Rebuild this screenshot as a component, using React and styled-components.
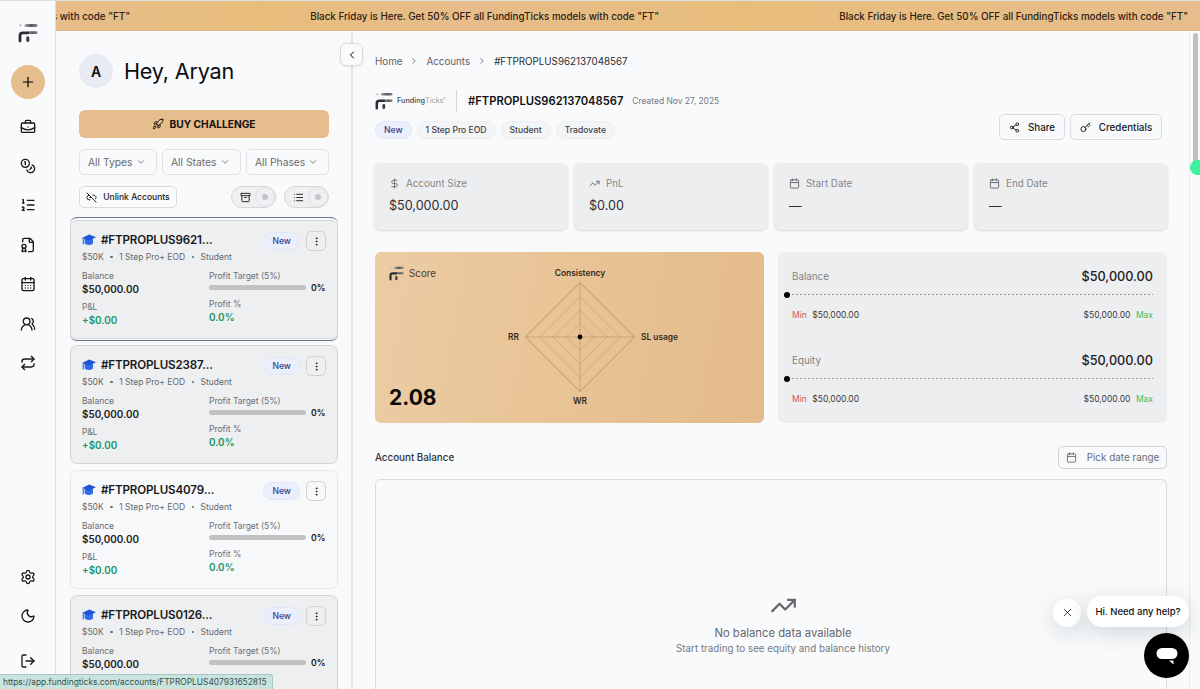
import styled, { createGlobalStyle } from "styled-components";
import {
    Archive,
    Calendar,
    CalendarDays,
    BriefcaseBusiness,
    ChevronDown,
    ChevronLeft,
    ChevronRight,
    Coins,
    DollarSign,
    EllipsisVertical,
    FileBadge,
    Key,
    Link2Off,
    List,
    ListOrdered,
    LogOut,
    Moon,
    Plus,
    Repeat,
    Rocket,
    Settings,
    Share2,
    TrendingUp,
    UsersRound,
    X,
} from "lucide-react";

const GlobalStyle = createGlobalStyle`
    * {
        box-sizing: border-box;
    }

    body {
        margin: 0;
        overflow: hidden;
        background-color: #f9fafc;
        color: #18181b;
        font-family: Inter, sans-serif;
        font-size: 10px;
    }
`;

const Page = styled.div`
    position: relative;
    display: flex;
    width: 1200px;
    height: 689px;
    overflow: hidden;
    border-top: 1px solid #dfdfdf;
`;

const SideBar = styled.nav`
    width: 56px;
    flex-shrink: 0;
    display: flex;
    flex-direction: column;
    align-items: center;
    padding-top: 22px;
    border-right: 1px solid #dcdde0;
`;

const AddBtn = styled.button`
    width: 34px;
    height: 34px;
    margin: 22px 0 8px;
    padding: 0;
    display: flex;
    align-items: center;
    justify-content: center;
    border: none;
    border-radius: 50%;
    background-color: #e6be8d;
`;

const NavItem = styled.div`
    height: ${(props) => props.$height || 39.4}px;
    display: flex;
    align-items: center;
`;

const NavBottom = styled.div`
    margin-top: auto;
    padding-bottom: 4px;
`;

const Right = styled.div`
    flex: 1;
    min-width: 0;
    display: flex;
    flex-direction: column;
`;

const Banner = styled.div`
    position: relative;
    z-index: 2;
    height: 30px;
    flex-shrink: 0;
    display: flex;
    align-items: center;
    justify-content: flex-end;
    gap: 179px;
    padding: 2px 12px 0 0;
    overflow: hidden;
    background: linear-gradient(90deg, #e6bd8a, #e8bd7c 18%, #e6bd8b 36%, #e8bd7c 60%, #e6bd8b);
    border-bottom: 1px solid #dfb682;
    color: #2d2114;
    font-size: 9.8px;
    font-weight: 500;
    white-space: nowrap;
`;

const BannerText = styled.span`
    width: 350px;
    flex-shrink: 0;
    text-align: right;
`;

const Columns = styled.div`
    flex: 1;
    min-height: 0;
    display: flex;
`;

const Accounts = styled.aside`
    position: relative;
    width: 297px;
    flex-shrink: 0;
    padding: 23px 13px 0 14px;
    border-right: 2px solid #e3e4e8;
`;

const CollapseBtn = styled.button`
    position: absolute;
    top: 12px;
    right: -12px;
    z-index: 3;
    width: 23px;
    height: 23px;
    padding: 0;
    display: flex;
    align-items: center;
    justify-content: center;
    border: 1px solid #d9dade;
    border-radius: 6px;
    background-color: #fbfbfd;
    box-shadow: 0 1px 3px rgba(0, 0, 0, 0.08);
`;

const Controls = styled.div`
    padding: 0 9px;
`;

const Greeting = styled.div`
    height: 34px;
    display: flex;
    align-items: center;
    gap: 11px;
    font-size: 21.6px;
    letter-spacing: -0.2px;
    color: #0c0c0e;
`;

const Avatar = styled.div`
    width: 34px;
    height: 34px;
    display: flex;
    align-items: center;
    justify-content: center;
    border-radius: 50%;
    background-color: #e9ebf4;
    font-size: 14px;
    font-weight: 600;
`;

const BuyBtn = styled.button`
    width: 250px;
    height: 28px;
    margin-top: 22px;
    display: flex;
    align-items: center;
    justify-content: center;
    gap: 5px;
    border: none;
    border-radius: 6px;
    background-color: #e6be8d;
    color: #16120d;
    font: 700 10.2px Inter, sans-serif;
`;

const Filters = styled.div`
    width: 250px;
    margin-top: 11px;
    display: flex;
    justify-content: space-between;
`;

const Select = styled.div`
    width: ${(props) => props.$width}px;
    height: 26px;
    padding: 0 10px 0 8px;
    display: flex;
    align-items: center;
    justify-content: space-between;
    border: 1px solid #e1e2e6;
    border-radius: 5px;
    color: #696b70;
    font-size: 10.3px;
    white-space: nowrap;
`;

const Tools = styled.div`
    width: 250px;
    height: 22px;
    margin-top: 11px;
    display: flex;
    gap: 8px;
`;

const UnlinkBtn = styled.div`
    width: 98px;
    margin-right: auto;
    display: flex;
    align-items: center;
    justify-content: center;
    gap: 6px;
    border: 1px solid #d9dade;
    border-radius: 5px;
    font-size: 8.5px;
    font-weight: 500;
    white-space: nowrap;
`;

const Toggle = styled.div`
    width: 45px;
    display: flex;
    align-items: center;
    justify-content: space-between;
    padding-left: 8px;
    border: 1px solid #d6d7da;
    border-radius: 11px;
    background-color: #eff0f2;
`;

const Knob = styled.div`
    width: 20px;
    height: 20px;
    display: flex;
    align-items: center;
    justify-content: center;
    border: 1px solid #dedfe2;
    border-radius: 50%;

    &::after {
        content: "";
        width: 6px;
        height: 6px;
        border-radius: 50%;
        background-color: #c3c4c7;
    }
`;

const CardList = styled.div`
    margin-top: 9px;
    display: flex;
    flex-direction: column;
    gap: 6px;
`;

const Selected = styled.div`
    margin-bottom: -2px;
    padding: 2px 0 1px;
    border: solid #6f7387;
    border-width: 1px 0;
    border-radius: 7px;
`;

const Card = styled.div`
    height: 119px;
    padding: 10px 11px 0 11px;
    border: 1px solid ${(props) => (props.$hover ? "#e6e7ea" : "#d3d5d8")};
    border-radius: 7px;
    background-color: ${(props) => (props.$hover ? "#f7f8fa" : "#edeff0")};
`;

const CardHead = styled.div`
    height: 20px;
    display: flex;
    align-items: center;
`;

const CardTitle = styled.div`
    flex: 1;
    display: flex;
    align-items: center;
    gap: 5px;
    padding-bottom: 3px;
    font-size: 11.6px;
    font-weight: 600;
    letter-spacing: -0.15px;
`;

const Tag = styled.span`
    height: 18px;
    padding: 0 8px;
    display: inline-flex;
    align-items: center;
    border: 1px solid ${(props) => (props.$blue ? "#e1e6f9" : "#edeef1")};
    border-radius: 9px;
    background-color: ${(props) => (props.$blue ? "#ebeffc" : "#f4f5f7")};
    color: ${(props) => (props.$blue ? "#37418c" : "#3f4044")};
    font-size: 8.6px;
    font-weight: 500;
`;

const MenuBtn = styled.div`
    width: 20px;
    height: 20px;
    margin-left: 6px;
    display: flex;
    align-items: center;
    justify-content: center;
    border: 1px solid #d0d2d5;
    border-radius: 5px;
`;

const Meta = styled.div`
    height: 12px;
    display: flex;
    align-items: center;
    gap: 6.5px;
    color: #66686d;
    font-size: 8.5px;
    white-space: nowrap;
`;

const Dot = styled.span`
    width: 2.5px;
    height: 2.5px;
    border-radius: 50%;
    background-color: #66686d;
`;

const Figures = styled.div`
    margin-top: 7px;
    display: grid;
    grid-template-columns: 127px 1fr;
`;

const Label = styled.div`
    height: 13px;
    line-height: 12px;
    color: #6c6e73;
    font-size: 8.5px;
`;

const Value = styled.div`
    height: 13px;
    margin-bottom: 5px;
    line-height: 13px;
    color: ${(props) => (props.$green ? "#1c9469" : "#1f2023")};
    font-size: 9.9px;
    font-weight: 600;
`;

const TargetRow = styled.div`
    height: 11px;
    margin: -1px 0 5px;
    display: flex;
    align-items: center;
    gap: 5px;
    font-size: 8.7px;
    font-weight: 600;
`;

const Track = styled.div`
    width: 97px;
    height: 5px;
    border-radius: 3px;
    background-color: #bfc1c3;
`;

const Main = styled.main`
    flex: 1;
    min-width: 0;
    padding: 21px 22px 0 22px;
    display: flex;
    flex-direction: column;
`;

const Crumbs = styled.div`
    height: 18px;
    display: flex;
    align-items: center;
    gap: 7px;
    color: #5f6166;
    font-size: 9.8px;
`;

const CurrentCrumb = styled.span`
    color: #2b2c30;
    font-size: 9.8px;
`;

const Header = styled.div`
    margin-top: 19px;
    height: 53px;
    display: flex;
    justify-content: space-between;
`;

const TitleRow = styled.div`
    height: 23px;
    display: flex;
    align-items: center;
`;

const Brand = styled.span`
    width: 48px;
    margin: 0 11px 0 4px;
    color: #4a4b4f;
    font-size: 7.3px;
    font-weight: 500;
    white-space: nowrap;

    span {
        color: #9b9ca0;
        font-weight: 400;
    }

    sup {
        font-size: 3px;
        line-height: 0;
    }
`;

const AccountId = styled.h1`
    margin: 0 9px 0 0;
    padding-left: 11px;
    line-height: 22px;
    border-left: 1px solid #d5d6d9;
    color: #0f0f11;
    font-size: 11.2px;
    font-weight: 600;
`;

const Created = styled.span`
    color: #77797e;
    font-size: 8.45px;
`;

const Tags = styled.div`
    margin-top: 9px;
    display: flex;
    gap: 5px;
`;

const Actions = styled.div`
    padding: 25px 5px 0 0;
    display: flex;
    gap: 5px;
`;

const ActionBtn = styled.div`
    width: ${(props) => props.$width}px;
    height: 26px;
    display: flex;
    align-items: center;
    justify-content: center;
    gap: 8px;
    border: 1px solid #d9dade;
    border-radius: 5px;
    font-size: 9.8px;
    font-weight: 500;
`;

const Stats = styled.div`
    margin: 21px -1px 0 -1px;
    display: grid;
    grid-template-columns: repeat(4, 1fr);
    gap: 6px;
`;

const Stat = styled.div`
    height: 67px;
    padding: 13px 15px;
    border-radius: 7px;
    background-color: #edeef0;
    box-shadow: 0 1px 2px rgba(0, 0, 0, 0.14);
`;

const StatLabel = styled.div`
    height: 14px;
    display: flex;
    align-items: center;
    gap: 6px;
    color: #85878b;
    font-size: 9.8px;

    svg {
        color: #66686c;
    }
`;

const StatValue = styled.div`
    height: 18px;
    margin-top: 7px;
    line-height: 18px;
    color: #2c2d30;
    font-size: 12.6px;
`;

const Panels = styled.div`
    margin-top: 22px;
    display: grid;
    grid-template-columns: 389px 389px;
    justify-content: space-between;
`;

const ScoreCard = styled.div`
    height: 171px;
    padding: 14px;
    display: grid;
    grid-template-columns: 118px 1fr;
    border-radius: 6px;
    background: linear-gradient(100deg, #ebcca4, #e8c395 50%, #e4bb8a);
`;

const ScoreSide = styled.div`
    display: flex;
    flex-direction: column;
    justify-content: space-between;
`;

const ScoreLabel = styled.div`
    height: 15px;
    display: flex;
    align-items: center;
    gap: 5px;
    color: #4a3c2b;
    font-size: 9.8px;
`;

const Score = styled.div`
    height: 25px;
    margin-bottom: 2px;
    line-height: 25px;
    color: #0c0a08;
    font-size: 21px;
    font-weight: 700;
`;

const RadarLabel = styled.text`
    fill: #35291a;
    font-size: 8.4px;
    font-weight: 600;
    text-anchor: ${(props) => props.$anchor || "middle"};
`;

const Limits = styled.div`
    height: 171px;
    padding: 15px 14px 0;
    display: flex;
    flex-direction: column;
    gap: 29px;
    border-radius: 6px;
    background-color: #edeef0;
`;

const LimitTop = styled.div`
    height: 18px;
    display: flex;
    align-items: center;
    justify-content: space-between;
    color: #808286;
    font-size: 9.8px;
`;

const LimitValue = styled.span`
    color: #1f2023;
    font-size: 12.7px;
    font-weight: 500;
`;

const LimitLine = styled.div`
    position: relative;
    height: 1px;
    margin: 9px 0 13px;
    background: repeating-linear-gradient(90deg, #97999c 0 2px, transparent 2px 4px);

    &::before {
        content: "";
        position: absolute;
        top: -2px;
        left: -8px;
        width: 6px;
        height: 6px;
        border-radius: 50%;
        background-color: #000;
    }
`;

const LimitRange = styled.div`
    height: 14px;
    display: flex;
    align-items: center;
    justify-content: space-between;
    color: #3a3b3f;
    font-size: 8.5px;
`;

const Min = styled.span`
    margin-right: 5.5px;
    color: #c95a5a;
`;

const Max = styled.span`
    margin-left: 5.5px;
    color: #36bd66;
`;

const SectionHead = styled.div`
    height: 22px;
    margin-top: 23px;
    display: flex;
    align-items: center;
    justify-content: space-between;
    color: #303135;
    font-size: 9.8px;
    font-weight: 500;
`;

const DateBtn = styled.div`
    width: 109px;
    height: 23px;
    display: flex;
    align-items: center;
    justify-content: center;
    gap: 10px;
    border: 1px solid #d3d4d8;
    border-radius: 5px;
    color: #6a6c71;
    font-size: 9.9px;
    font-weight: 400;
    white-space: nowrap;
`;

const Chart = styled.div`
    flex: 1;
    margin-top: 11px;
    padding: 112px 0 0 24px;
    display: flex;
    flex-direction: column;
    align-items: center;
    border: 1px solid #d9dade;
    border-bottom: none;
    border-radius: 6px 6px 0 0;
    color: #66686c;
`;

const EmptyTitle = styled.div`
    margin-top: 5px;
    height: 18px;
    line-height: 18px;
    font-size: 11.3px;
`;

const EmptyText = styled.div`
    height: 12px;
    line-height: 13px;
    color: #77797d;
    font-size: 9.8px;
`;

const ScrollBar = styled.div`
    width: 11px;
    flex-shrink: 0;
    display: flex;
    justify-content: center;
    padding-top: 2px;
    border-left: 1px solid #e9e9ec;
    background-color: #fafafa;
`;

const ScrollThumb = styled.div`
    width: 5px;
    height: 133px;
    border-radius: 3px;
    background-color: #c1c1c1;
`;

const GreenDot = styled.div`
    position: absolute;
    top: 159px;
    right: -6px;
    width: 16px;
    height: 15px;
    border-radius: 8px;
    background-color: #3df09b;
`;

const ChatBar = styled.div`
    position: absolute;
    right: 11px;
    top: 595px;
    display: flex;
    align-items: center;
    gap: 6px;
`;

const ChatClose = styled.div`
    width: 28px;
    height: 28px;
    margin-top: 2px;
    display: flex;
    align-items: center;
    justify-content: center;
    border-radius: 50%;
    background-color: #fff;
    box-shadow: 0 6px 22px rgba(30, 60, 60, 0.18);
`;

const ChatBubble = styled.div`
    width: 102px;
    height: 31px;
    display: flex;
    align-items: center;
    justify-content: center;
    border-radius: 15px;
    background-color: #fff;
    box-shadow: 0 6px 22px rgba(30, 60, 60, 0.18);
    color: #111;
    font-size: 9.5px;
    font-weight: 500;
    white-space: nowrap;
`;

const ChatBtn = styled.div`
    position: absolute;
    right: 11px;
    top: 632px;
    width: 45px;
    height: 45px;
    display: flex;
    align-items: center;
    justify-content: center;
    border-radius: 50%;
    background-color: #000;
`;

const StatusUrl = styled.div`
    position: absolute;
    left: 0;
    bottom: 0;
    width: 273px;
    height: 15px;
    padding-left: 3px;
    line-height: 14px;
    border: 1px solid #a9c6bf;
    border-width: 1px 1px 0 0;
    border-radius: 0 3px 0 0;
    background-color: #c9e4de;
    color: #37504b;
    font-size: 8.4px;
    white-space: nowrap;
`;

const accounts = [
    { id: "#FTPROPLUS9621...", selected: true },
    { id: "#FTPROPLUS2387..." },
    { id: "#FTPROPLUS4079...", hover: true },
    { id: "#FTPROPLUS0126..." },
];

const navIcons = [BriefcaseBusiness, Coins, ListOrdered, FileBadge, CalendarDays, UsersRound, Repeat];

const promo = 'Black Friday is Here. Get 50% OFF all FundingTicks models with code "FT"';

const Logo = ({ size }) => (
    <svg width={size} height={size} viewBox="0 0 20 20">
        <defs>
            <linearGradient id="logoBar" x1="0" x2="1" y1="0" y2="0">
                <stop offset="0" stopColor="#a9abb1" />
                <stop offset="0.5" stopColor="#55575e" />
                <stop offset="1" stopColor="#85878d" />
            </linearGradient>
        </defs>
        <circle cx="2.3" cy="2.4" r="1.1" fill="#b5b7bd" />
        <rect x="6.5" y="1" width="13" height="3" rx="1.5" fill="url(#logoBar)" />
        <rect x="9" y="8.3" width="10.5" height="2.8" rx="1.2" fill="url(#logoBar)" />
        <path d="M2 18V12.5Q2 9.8 5 9.8H10" fill="none" stroke="#2a2b30" strokeWidth="2.8" strokeLinecap="round" />
        <path d="M9.8 14.8V17.6" stroke="#3a3b41" strokeWidth="3" strokeLinecap="round" />
    </svg>
);

const GradCap = () => (
    <svg width="14" height="12" viewBox="0 0 14 12">
        <path d="M2.6 5V9.6Q7 12.6 11 9.6V5Z" fill="#2f6bea" />
        <path d="M0 4L7.2 0.6L14 3.2L7 6.6Z" fill="#1d55d6" />
        <path d="M1.2 4.4V10.4" stroke="#1d55d6" strokeWidth="1" />
    </svg>
);

const Radar = () => (
    <svg width="200" height="146" viewBox="0 0 200 146">
        <g transform="translate(73 71)" fill="none" stroke="#b2905f">
            {[13.5, 27, 40.5].map((r) => (
                <path key={r} d={`M0 ${-r}L${r} 0L0 ${r}L${-r} 0Z`} strokeWidth="0.6" opacity="0.7" />
            ))}
            <path d="M0 -54.5L54.5 0L0 54.5L-54.5 0Z" strokeWidth="0.9" />
            <path d="M0 -54.5V54.5M-54.5 0H54.5" strokeWidth="0.7" opacity="0.8" />
            <circle r="2.4" fill="#000" stroke="none" />
        </g>
        <RadarLabel x="73" y="10">Consistency</RadarLabel>
        <RadarLabel x="73" y="138">WR</RadarLabel>
        <RadarLabel x="12" y="74" $anchor="end">RR</RadarLabel>
        <RadarLabel x="134" y="74" $anchor="start">SL usage</RadarLabel>
    </svg>
);

const AccountCard = ({ id, hover }) => (
    <Card $hover={hover}>
        <CardHead>
            <CardTitle>
                <GradCap />
                {id}
            </CardTitle>
            <Tag $blue>New</Tag>
            <MenuBtn>
                <EllipsisVertical size={11} />
            </MenuBtn>
        </CardHead>
        <Meta>
            $50K <Dot /> 1 Step Pro+ EOD <Dot /> Student
        </Meta>
        <Figures>
            <div>
                <Label>Balance</Label>
                <Value>$50,000.00</Value>
                <Label>P&L</Label>
                <Value $green>+$0.00</Value>
            </div>
            <div>
                <Label>Profit Target (5%)</Label>
                <TargetRow>
                    <Track />
                    0%
                </TargetRow>
                <Label>Profit %</Label>
                <Value $green>0.0%</Value>
            </div>
        </Figures>
    </Card>
);

const Limit = ({ name }) => (
    <div>
        <LimitTop>
            {name}
            <LimitValue>$50,000.00</LimitValue>
        </LimitTop>
        <LimitLine />
        <LimitRange>
            <span>
                <Min>Min</Min>$50,000.00
            </span>
            <span>
                $50,000.00<Max>Max</Max>
            </span>
        </LimitRange>
    </div>
);

const App = () => {
    return (
        <Page>
            <GlobalStyle />
            <SideBar>
                <Logo size={20} />
                <AddBtn>
                    <Plus size={16} strokeWidth={1.8} />
                </AddBtn>
                {navIcons.map((Icon, i) => (
                    <NavItem key={i}>
                        <Icon size={16} />
                    </NavItem>
                ))}
                <NavBottom>
                    <NavItem>
                        <Settings size={16} />
                    </NavItem>
                    <NavItem>
                        <Moon size={16} />
                    </NavItem>
                    <NavItem $height={49}>
                        <LogOut size={16} />
                    </NavItem>
                </NavBottom>
            </SideBar>
            <Right>
                <Banner>
                    <BannerText>{promo}</BannerText>
                    <BannerText>{promo}</BannerText>
                    <BannerText>{promo}</BannerText>
                </Banner>
                <Columns>
                    <Accounts>
                        <CollapseBtn>
                            <ChevronLeft size={12} />
                        </CollapseBtn>
                        <Controls>
                            <Greeting>
                                <Avatar>A</Avatar>
                                Hey, Aryan
                            </Greeting>
                            <BuyBtn>
                                <Rocket size={12} />
                                BUY CHALLENGE
                            </BuyBtn>
                            <Filters>
                                <Select $width={78}>
                                    All Types <ChevronDown size={10} />
                                </Select>
                                <Select $width={79}>
                                    All States <ChevronDown size={10} />
                                </Select>
                                <Select $width={83}>
                                    All Phases <ChevronDown size={10} />
                                </Select>
                            </Filters>
                            <Tools>
                                <UnlinkBtn>
                                    <Link2Off size={11} />
                                    Unlink Accounts
                                </UnlinkBtn>
                                <Toggle>
                                    <Archive size={11} />
                                    <Knob />
                                </Toggle>
                                <Toggle>
                                    <List size={11} />
                                    <Knob />
                                </Toggle>
                            </Tools>
                        </Controls>
                        <CardList>
                            {accounts.map((account) =>
                                account.selected ? (
                                    <Selected key={account.id}>
                                        <AccountCard id={account.id} />
                                    </Selected>
                                ) : (
                                    <AccountCard key={account.id} id={account.id} hover={account.hover} />
                                )
                            )}
                        </CardList>
                    </Accounts>
                    <Main>
                        <Crumbs>
                            Home <ChevronRight size={10} /> Accounts <ChevronRight size={10} />
                            <CurrentCrumb>#FTPROPLUS962137048567</CurrentCrumb>
                        </Crumbs>
                        <Header>
                            <div>
                                <TitleRow>
                                    <Logo size={18} />
                                    <Brand>
                                        Funding<span>Ticks<sup>®</sup></span>
                                    </Brand>
                                    <AccountId>#FTPROPLUS962137048567</AccountId>
                                    <Created>Created Nov 27, 2025</Created>
                                </TitleRow>
                                <Tags>
                                    <Tag $blue>New</Tag>
                                    <Tag>1 Step Pro EOD</Tag>
                                    <Tag>Student</Tag>
                                    <Tag>Tradovate</Tag>
                                </Tags>
                            </div>
                            <Actions>
                                <ActionBtn $width={66}>
                                    <Share2 size={11} />
                                    Share
                                </ActionBtn>
                                <ActionBtn $width={92}>
                                    <Key size={11} />
                                    Credentials
                                </ActionBtn>
                            </Actions>
                        </Header>
                        <Stats>
                            <Stat>
                                <StatLabel>
                                    <DollarSign size={11} /> Account Size
                                </StatLabel>
                                <StatValue>$50,000.00</StatValue>
                            </Stat>
                            <Stat>
                                <StatLabel>
                                    <TrendingUp size={11} /> PnL
                                </StatLabel>
                                <StatValue>$0.00</StatValue>
                            </Stat>
                            <Stat>
                                <StatLabel>
                                    <Calendar size={11} /> Start Date
                                </StatLabel>
                                <StatValue>—</StatValue>
                            </Stat>
                            <Stat>
                                <StatLabel>
                                    <Calendar size={11} /> End Date
                                </StatLabel>
                                <StatValue>—</StatValue>
                            </Stat>
                        </Stats>
                        <Panels>
                            <ScoreCard>
                                <ScoreSide>
                                    <ScoreLabel>
                                        <Logo size={15} /> Score
                                    </ScoreLabel>
                                    <Score>2.08</Score>
                                </ScoreSide>
                                <Radar />
                            </ScoreCard>
                            <Limits>
                                <Limit name="Balance" />
                                <Limit name="Equity" />
                            </Limits>
                        </Panels>
                        <SectionHead>
                            Account Balance
                            <DateBtn>
                                <Calendar size={11} />
                                Pick date range
                            </DateBtn>
                        </SectionHead>
                        <Chart>
                            <TrendingUp size={27} />
                            <EmptyTitle>No balance data available</EmptyTitle>
                            <EmptyText>Start trading to see equity and balance history</EmptyText>
                        </Chart>
                    </Main>
                    <ScrollBar>
                        <ScrollThumb />
                    </ScrollBar>
                </Columns>
            </Right>
            <GreenDot />
            <ChatBar>
                <ChatClose>
                    <X size={13} strokeWidth={1.5} />
                </ChatClose>
                <ChatBubble>Hi. Need any help?</ChatBubble>
            </ChatBar>
            <ChatBtn>
                <svg width="22" height="18" viewBox="0 0 22 18">
                    <rect x="0.5" y="1" width="21" height="11" rx="5.5" fill="#fff" />
                    <path d="M13 13.5H17.5V17.5Z" fill="#fff" />
                </svg>
            </ChatBtn>
            <StatusUrl>https://app.fundingticks.com/accounts/FTPROPLUS407931652815</StatusUrl>
        </Page>
    );
};

export default App;
